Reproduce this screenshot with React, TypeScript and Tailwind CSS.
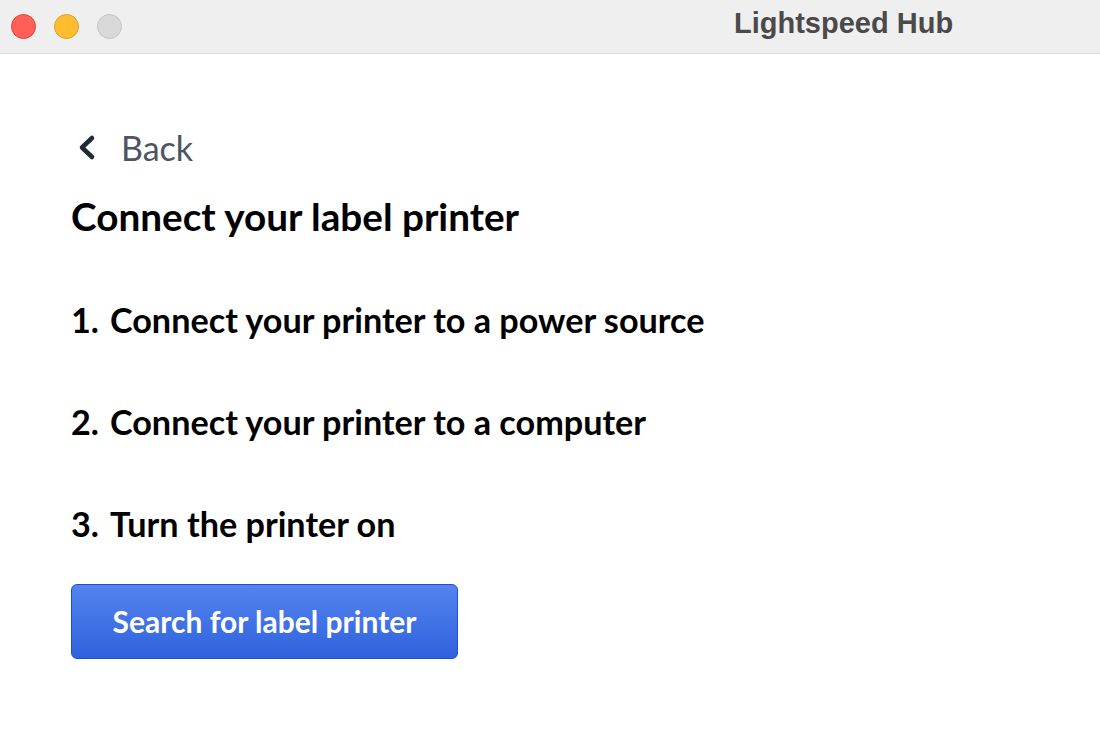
export default function App() {
  const steps = [
    "Connect your printer to a power source",
    "Connect your printer to a computer",
    "Turn the printer on",
  ];

  return (
    <div className="flex h-[751px] w-[1100px] flex-col bg-white font-['Lato',sans-serif]">
      {/* title bar */}
      <div className="relative flex h-[54px] shrink-0 items-center border-b border-[#dcdcdc] bg-[#efefef] pl-[11px]">
        <div className="flex gap-[18px]">
          <span className="h-[25px] w-[25px] rounded-full border border-[#e0443e] bg-[#fe5f57]" />
          <span className="h-[25px] w-[25px] rounded-full border border-[#dea123] bg-[#febc2e]" />
          <span className="h-[25px] w-[25px] rounded-full border border-[#c4c4c4] bg-[#d9d9d9]" />
        </div>
        <span className="absolute left-[734px] top-[2px] font-['Liberation_Sans',Arial,sans-serif] text-[29px] font-bold text-[#4a4a4a]">
          Lightspeed Hub
        </span>
      </div>

      <div className="flex flex-col pl-[71px] pt-[74px]">
        <button className="flex items-center gap-[21px] text-[#4b5563]">
          <svg width="26" height="30" viewBox="0 0 26 30" className="ml-[3px]">
            <path
              d="M18 5 L8 14.5 L18 24"
              fill="none"
              stroke="#1f2937"
              strokeWidth="4.5"
              strokeLinecap="round"
              strokeLinejoin="round"
            />
          </svg>
          <span className="text-[34px] leading-[40px]">Back</span>
        </button>

        <h1 className="mt-[28px] text-[38.7px] font-bold leading-[40px] text-black">
          Connect your label printer
        </h1>

        <ol className="mt-[64px] flex flex-col gap-[62px]">
          {steps.map((s, i) => (
            <li key={i} className="flex gap-[11px] text-[34.2px] font-bold leading-[40px] text-black">
              <span>{i + 1}.</span>
              <span>{s}</span>
            </li>
          ))}
        </ol>

        <button className="mt-[40px] h-[75px] w-[387px] rounded-[6px] border border-[#1d4ed8] bg-gradient-to-b from-[#5583ef] to-[#2e62dd] text-[30px] font-bold text-white">
          Search for label printer
        </button>
      </div>
    </div>
  );
}
